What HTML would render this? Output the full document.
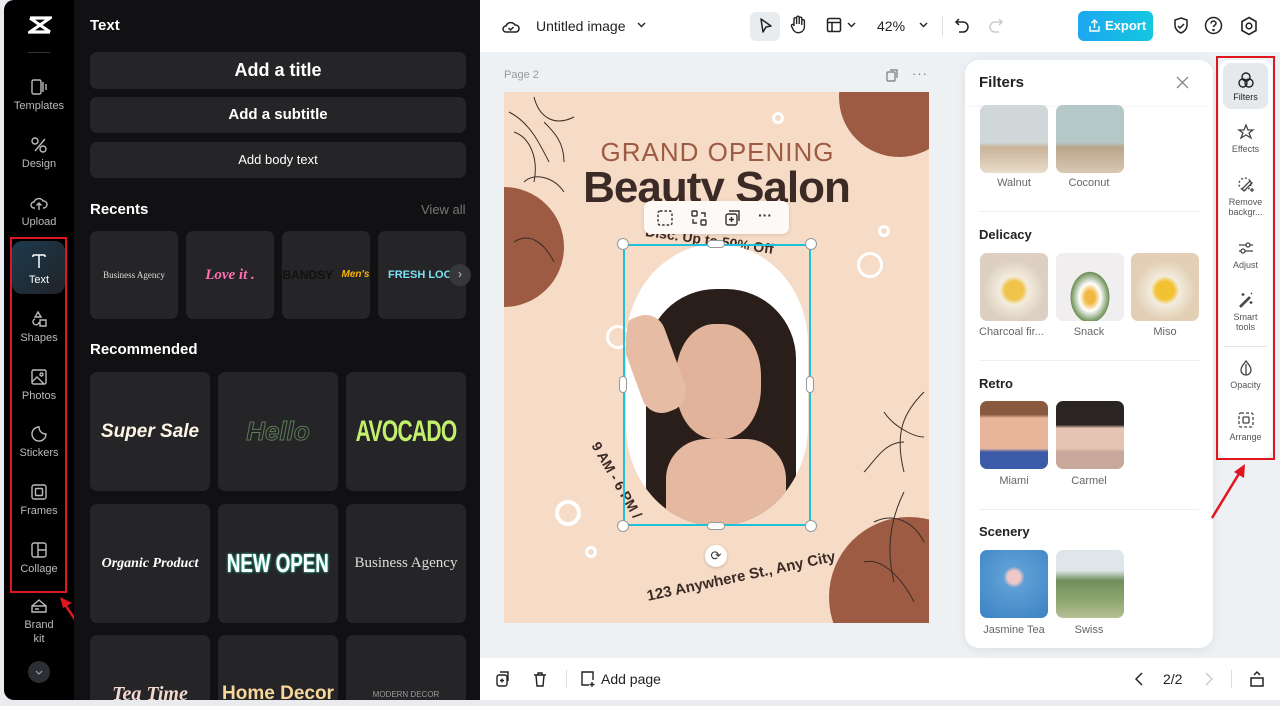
<!DOCTYPE html>
<html><head><meta charset="utf-8"><style>
*{box-sizing:border-box;margin:0;padding:0}
body{width:1280px;height:706px;overflow:hidden;background:#e9ebee;font-family:"Liberation Sans",sans-serif;position:relative}
.abs{position:absolute}
#nav{left:4px;top:0;width:70px;height:700px;background:#000;border-radius:10px 0 0 10px}
#panel{left:74px;top:0;width:406px;height:700px;background:#111113}
.ni{position:absolute;left:0;width:70px;text-align:center;color:#bbb;font-size:11px}
.ni svg{display:block;margin:0 auto 4px}
.btn{position:absolute;left:90px;width:376px;background:#252528;border-radius:7px;color:#fff;text-align:center;font-weight:bold}
.card{position:absolute;background:#252528;border-radius:7px;display:flex;align-items:center;justify-content:center;overflow:hidden;white-space:nowrap}
.h{color:#fff;font-weight:bold;font-size:15px;position:absolute}
#top{left:480px;top:0;width:800px;height:52px;background:#fff}
#canvas{left:480px;top:52px;width:800px;height:606px;background:#eef1f4}
#bot{left:480px;top:658px;width:800px;height:42px;background:#fff}
#filters{left:965px;top:60px;width:248px;height:588px;background:#fff;border-radius:14px;box-shadow:0 2px 10px rgba(0,0,0,.08)}
.th{position:absolute;width:68px;height:68px;border-radius:7px}
.tl{position:absolute;width:80px;text-align:center;font-size:11px;color:#666}
.fh{position:absolute;left:979px;font-size:13px;font-weight:bold;color:#222}
.dv{position:absolute;left:979px;width:220px;height:1px;background:#eceef0}
#rt{left:1219px;top:60px;width:53px;height:398px;background:#fff;border-radius:10px}
.ri{position:absolute;left:0;width:53px;text-align:center;font-size:9px;color:#555;line-height:10px}
.ri svg{display:block;margin:0 auto 3px}
</style></head><body>

<div id="nav" class="abs">
  <svg class="abs" style="left:24px;top:15px" width="24" height="20" viewBox="0 0 24 20"><path d="M2 3h20L2 17h20M2 3l20 14" stroke="#fff" stroke-width="3.2" fill="none"/></svg>
  <div class="abs" style="left:24px;top:52px;width:22px;height:1px;background:#333"></div>
  <div class="ni" style="top:78px"><svg width="18" height="18" viewBox="0 0 18 18" fill="none" stroke="#bbb" stroke-width="1.4"><rect x="2" y="2" width="9" height="14" rx="1.5"/><path d="M13 4v10M16 6v6"/></svg>Templates</div>
  <div class="ni" style="top:136px"><svg width="18" height="18" viewBox="0 0 18 18" fill="none" stroke="#bbb" stroke-width="1.4"><circle cx="5" cy="5" r="3"/><circle cx="13" cy="13" r="3"/><path d="M5 15L15 3"/></svg>Design</div>
  <div class="ni" style="top:194px"><svg width="18" height="18" viewBox="0 0 18 18" fill="none" stroke="#bbb" stroke-width="1.4"><path d="M5 14H4a3 3 0 010-6 5 5 0 019-1 3.5 3.5 0 011 7h-1M9 16V9M6.5 11.5L9 9l2.5 2.5"/></svg>Upload</div>
  <div class="abs" style="left:8px;top:241px;width:53px;height:53px;border-radius:10px;background:linear-gradient(135deg,#1d3a4e,#202327)"></div>
  <div class="ni" style="top:252px;color:#fff"><svg width="18" height="18" viewBox="0 0 18 18" fill="none" stroke="#fff" stroke-width="1.5"><path d="M3 3h12M9 3v13M3 3v2M15 3v2"/></svg>Text</div>
  <div class="ni" style="top:310px"><svg width="18" height="18" viewBox="0 0 18 18" fill="none" stroke="#bbb" stroke-width="1.4"><path d="M8 2l3 5H5zM5 9a3 3 0 104 3M10 10h6v6h-6z"/></svg>Shapes</div>
  <div class="ni" style="top:368px"><svg width="18" height="18" viewBox="0 0 18 18" fill="none" stroke="#bbb" stroke-width="1.4"><rect x="2" y="2" width="14" height="14" rx="1.5"/><circle cx="11.5" cy="6.5" r="1.5"/><path d="M2 14l5-5 7 7"/></svg>Photos</div>
  <div class="ni" style="top:425px"><svg width="18" height="18" viewBox="0 0 18 18" fill="none" stroke="#bbb" stroke-width="1.4"><path d="M9 2a7 7 0 107 7c-4 0-7-3-7-7z"/></svg>Stickers</div>
  <div class="ni" style="top:483px"><svg width="18" height="18" viewBox="0 0 18 18" fill="none" stroke="#bbb" stroke-width="1.4"><rect x="2" y="2" width="14" height="14" rx="2"/><rect x="5.5" y="5.5" width="7" height="7" rx="1"/></svg>Frames</div>
  <div class="ni" style="top:541px"><svg width="18" height="18" viewBox="0 0 18 18" fill="none" stroke="#bbb" stroke-width="1.4"><rect x="2" y="2" width="14" height="14" rx="2"/><path d="M8 2v14M8 9h8"/></svg>Collage</div>
  <div class="ni" style="top:598px;line-height:14px"><svg width="18" height="16" viewBox="0 0 18 16" fill="none" stroke="#bbb" stroke-width="1.4"><path d="M2 8l7-6 7 6M2 8h14v6H2zM5 11h4"/></svg>Brand<br>kit</div>
  <div class="abs" style="left:24px;top:661px;width:22px;height:22px;border-radius:50%;background:#2d2e33"></div>
  <svg class="abs" style="left:31px;top:668px" width="8" height="8" viewBox="0 0 8 8"><path d="M1 3l3 3 3-3" stroke="#aaa" fill="none"/></svg>
</div>
<div class="abs" style="left:10px;top:237px;width:57px;height:356px;border:2px solid #e0161e"></div>
<svg class="abs" style="left:58px;top:597px" width="32" height="45" viewBox="0 0 32 45"><path d="M30 42L6 6" stroke="#e0161e" stroke-width="2.5"/><path d="M2 0l12 6-9 5z" fill="#e0161e"/></svg>

<div id="panel" class="abs"></div>
<div class="h" style="left:90px;top:17px">Text</div>
<div class="btn" style="top:52px;height:37px;line-height:37px;font-size:18px">Add a title</div>
<div class="btn" style="top:97px;height:36px;line-height:36px;font-size:15px">Add a subtitle</div>
<div class="btn" style="top:142px;height:36px;line-height:36px;font-size:13px;font-weight:normal">Add body text</div>
<div class="h" style="left:90px;top:201px">Recents</div>
<div class="abs" style="left:421px;top:202px;color:#777;font-size:13px">View all</div>
<div class="card" style="left:90px;top:231px;width:88px;height:88px;color:#ddd;font-family:'Liberation Serif',serif;font-size:9px">Business Agency</div>
<div class="card" style="left:186px;top:231px;width:88px;height:88px;color:#ff6fae;font-family:'Liberation Serif',serif;font-weight:bold;font-style:italic;font-size:15px">Love it .</div>
<div class="card" style="left:282px;top:231px;width:88px;height:88px;color:#111;font-weight:bold;font-size:12px;line-height:10px;text-align:center;white-space:normal">BANDSY<br><span style="color:#f5b800;font-style:italic;font-size:10px">&nbsp;&nbsp;&nbsp;Men's</span></div>
<div class="card" style="left:378px;top:231px;width:88px;height:88px;color:#7ee0f5;font-weight:bold;font-size:11px;justify-content:flex-start;padding-left:10px">FRESH LOOK</div>
<div class="abs" style="left:449px;top:264px;width:22px;height:22px;border-radius:50%;background:#36373b;color:#ccc;font-size:12px;text-align:center;line-height:21px">›</div>
<div class="h" style="left:90px;top:341px">Recommended</div>
<div class="card" style="left:90px;top:372px;width:120px;height:119px;color:#fff5e6;font-weight:bold;font-style:italic;font-size:19px">Super Sale</div>
<div class="card" style="left:218px;top:372px;width:120px;height:119px;color:transparent;-webkit-text-stroke:1px #5c7a55;font-weight:bold;font-style:italic;font-size:26px">Hello</div>
<div class="card" style="left:346px;top:372px;width:120px;height:119px;color:#c3f06a;font-weight:bold;font-size:30px;letter-spacing:-1px"><span style="display:inline-block;transform:scaleX(.7)">AVOCADO</span></div>
<div class="card" style="left:90px;top:504px;width:120px;height:119px;color:#fff;font-family:'Liberation Serif',serif;font-weight:bold;font-style:italic;font-size:14px">Organic Product</div>
<div class="card" style="left:218px;top:504px;width:120px;height:119px;color:#fff;font-weight:bold;font-size:26px;text-shadow:0 0 3px #35e0b0,0 0 1px #35e0b0"><span style="display:inline-block;transform:scaleX(.72);white-space:nowrap">NEW OPEN</span></div>
<div class="card" style="left:346px;top:504px;width:120px;height:119px;color:#ddd;font-family:'Liberation Serif',serif;font-size:15px">Business Agency</div>
<div class="card" style="left:90px;top:635px;width:120px;height:65px;border-radius:7px 7px 0 0;align-items:flex-end;color:#f3d8d0;font-family:'Liberation Serif',serif;font-weight:bold;font-style:italic;font-size:20px;line-height:12px">Tea Time</div>
<div class="card" style="left:218px;top:635px;width:120px;height:65px;border-radius:7px 7px 0 0;align-items:flex-end;color:#f7d79a;font-weight:bold;font-size:19px;line-height:12px">Home Decor</div>
<div class="card" style="left:346px;top:635px;width:120px;height:65px;border-radius:7px 7px 0 0;align-items:flex-end;color:#999;font-size:8px;line-height:6px;padding-bottom:2px">MODERN DECOR</div>
<div class="abs" style="left:480px;top:328px;width:7px;height:48px;background:#2a2b2e;border-radius:0 4px 4px 0"></div>

<div id="top" class="abs">
  <svg class="abs" style="left:22px;top:17px" width="18" height="18" viewBox="0 0 18 18" fill="none" stroke="#222" stroke-width="1.5"><path d="M5 15H4a3 3 0 010-6 5 5 0 019-1 3.5 3.5 0 011 7H5z"/><path d="M6.5 11l2 2 3-3"/></svg>
  <div class="abs" style="left:56px;top:18px;font-size:14px;color:#222">Untitled image</div>
  <svg class="abs" style="left:157px;top:22px" width="9" height="7"><path d="M1 1l3.5 3.5L8 1" stroke="#222" fill="none" stroke-width="1.4"/></svg>
  <div class="abs" style="left:270px;top:12px;width:30px;height:29px;background:#e9ecef;border-radius:6px"></div>
  <svg class="abs" style="left:278px;top:17px" width="16" height="18" viewBox="0 0 16 18"><path d="M3 2l10 7-5 1-3 5z" stroke="#222" stroke-width="1.5" fill="none" stroke-linejoin="round"/></svg>
  <svg class="abs" style="left:309px;top:15px" width="18" height="20" viewBox="0 0 18 20" fill="none" stroke="#222" stroke-width="1.4"><path d="M5 11V4a1.3 1.3 0 012.6 0v5M7.6 8V2.5a1.3 1.3 0 012.6 0V9M10.2 8V3.5a1.3 1.3 0 012.6 0V10M12.8 9V6a1.3 1.3 0 012.6 0v6a6 6 0 01-11 3l-2-4a1.3 1.3 0 012.2-1.2L5 11"/></svg>
  <svg class="abs" style="left:346px;top:17px" width="16" height="16" viewBox="0 0 16 16" fill="none" stroke="#222" stroke-width="1.5"><rect x="1.5" y="1.5" width="13" height="13" rx="1.5"/><path d="M1.5 5.5h13M6 5.5v9"/></svg>
  <svg class="abs" style="left:367px;top:22px" width="9" height="7"><path d="M1 1l3.5 3.5L8 1" stroke="#222" fill="none" stroke-width="1.4"/></svg>
  <div class="abs" style="left:397px;top:18px;font-size:14px;color:#222">42%</div>
  <svg class="abs" style="left:439px;top:22px" width="9" height="7"><path d="M1 1l3.5 3.5L8 1" stroke="#222" fill="none" stroke-width="1.4"/></svg>
  <div class="abs" style="left:462px;top:16px;width:1px;height:20px;background:#ddd"></div>
  <svg class="abs" style="left:474px;top:17px" width="16" height="17" viewBox="0 0 16 17" fill="none" stroke="#222" stroke-width="1.5"><path d="M5 2L2 5l3 3M2 5h7a5 5 0 010 10H5"/></svg>
  <svg class="abs" style="left:508px;top:17px" width="16" height="17" viewBox="0 0 16 17" fill="none" stroke="#ccc" stroke-width="1.5"><path d="M11 2l3 3-3 3M14 5H7a5 5 0 000 10h4"/></svg>
  <div class="abs" style="left:598px;top:11px;width:75px;height:30px;border-radius:6px;background:linear-gradient(90deg,#1ca7f0,#14c8e0);color:#fff;font-size:13px;font-weight:bold;line-height:30px;padding-left:27px">Export</div>
  <svg class="abs" style="left:608px;top:19px" width="13" height="14" viewBox="0 0 13 14" fill="none" stroke="#fff" stroke-width="1.4"><path d="M6.5 9V1M3.5 4l3-3 3 3M2 7v5h9V7"/></svg>
  <svg class="abs" style="left:692px;top:16px" width="18" height="20" viewBox="0 0 18 20" fill="none" stroke="#222" stroke-width="1.5"><path d="M9 2l6 2v5c0 4-3 7-6 8-3-1-6-4-6-8V4z"/><path d="M6 10l2 2 4-4"/></svg>
  <svg class="abs" style="left:724px;top:16px" width="19" height="19" viewBox="0 0 19 19" fill="none" stroke="#222" stroke-width="1.5"><circle cx="9.5" cy="9.5" r="8"/><path d="M7 7.5a2.5 2.5 0 115 0c0 1.5-2.5 2-2.5 3.5"/><circle cx="9.5" cy="14" r=".5"/></svg>
  <svg class="abs" style="left:760px;top:16px" width="18" height="20" viewBox="0 0 18 20" fill="none" stroke="#222" stroke-width="1.6"><path d="M9 1.5l7 4v9l-7 4-7-4v-9z"/><circle cx="9" cy="10" r="2.8"/></svg>
</div>

<div id="canvas" class="abs"></div>
<div class="abs" style="left:504px;top:69px;font-size:11px;color:#999">Page 2</div>
<svg class="abs" style="left:886px;top:69px" width="13" height="13" viewBox="0 0 13 13" fill="none" stroke="#777" stroke-width="1.2"><rect x="1" y="3" width="8" height="9" rx="1"/><path d="M4 1h7v8"/></svg>
<div class="abs" style="left:912px;top:66px;font-size:13px;color:#777;letter-spacing:1px">···</div>

<div class="abs" style="left:504px;top:92px;width:425px;height:531px;background:#f6dcc6;overflow:hidden">
  <div class="abs" style="left:-60px;top:95px;width:120px;height:120px;border-radius:50%;background:#9e5b44"></div>
  <div class="abs" style="left:335px;top:-55px;width:120px;height:120px;border-radius:50%;background:#9e5b44"></div>
  <div class="abs" style="left:325px;top:425px;width:160px;height:160px;border-radius:50%;background:#9e5b44"></div>
  <svg class="abs" style="left:0;top:0" width="425" height="531" fill="none" stroke="#3a2d28" stroke-width="1">
    <path d="M5 20c20 10 30 30 40 50M30 5c5 20 20 30 40 20M10 40c15 5 25 25 20 50M40 30c10 10 20 20 20 40M20 90c10-10 30-5 40 10M10 150c15-10 30 0 40 20"/>
    <path d="M420 300c-20 20-30 40-20 80M400 350c-20 0-30 20-40 30M380 320c10 15 30 25 40 25M370 430c20-10 40 0 50 20M360 470c20-5 40 20 50 40M400 400c-10 20-20 50-10 90"/>
  </svg>
  <div class="abs" style="left:268px;top:20px;width:12px;height:12px;border-radius:50%;border:3.5px solid #fff"></div>
  <div class="abs" style="left:374px;top:133px;width:12px;height:12px;border-radius:50%;border:3.5px solid #fff"></div>
  <div class="abs" style="left:353px;top:160px;width:26px;height:26px;border-radius:50%;border:3.5px solid #fff"></div>
  <div class="abs" style="left:102px;top:233px;width:24px;height:24px;border-radius:50%;border:3.5px solid #fff"></div>
  <div class="abs" style="left:51px;top:408px;width:26px;height:26px;border-radius:50%;border:4px solid #fff"></div>
  <div class="abs" style="left:81px;top:454px;width:12px;height:12px;border-radius:50%;border:3.5px solid #fff"></div>
  <div class="abs" style="left:0;top:45px;width:425px;text-align:center;font-size:26px;color:#9e5b44;letter-spacing:1px;padding-left:2px">GRAND OPENING</div>
  <div class="abs" style="left:0;top:71px;width:425px;text-align:center;font-size:44px;font-weight:bold;color:#3b2a26;letter-spacing:-1px">Beauty Salon</div>
  <div class="abs" style="left:141px;top:140px;font-size:14px;font-weight:bold;color:#3b2a26;transform:rotate(8deg)">Disc. Up to 50% Off</div>
  <div class="abs" style="left:122px;top:152px;width:182px;height:282px;border-radius:91px 91px 91px 91px/100px 100px 100px 100px;background:#fff;overflow:hidden">
    <div class="abs" style="left:20px;top:45px;width:150px;height:250px;border-radius:70px 70px 0 0;background:#2a1e1a"></div>
    <div class="abs" style="left:50px;top:80px;width:85px;height:115px;border-radius:45%;background:#e0b39a"></div>
    <div class="abs" style="left:40px;top:195px;width:120px;height:100px;background:#e4b9a0;border-radius:40px 40px 0 0"></div>
    <div class="abs" style="left:5px;top:70px;width:45px;height:100px;border-radius:20px;background:#e6bca4;transform:rotate(-20deg)"></div>
  </div>
  <div class="abs" style="left:141px;top:476px;font-size:15px;font-weight:bold;color:#3b2a26;transform:rotate(-12deg)">123 Anywhere St., Any City</div>
  <div class="abs" style="left:70px;top:380px;font-size:14px;font-weight:bold;color:#3b2a26;transform:rotate(60deg)">9 AM - 6 PM /</div>
</div>
<div class="abs" style="left:623px;top:244px;width:188px;height:282px;border:2px solid #1fc0dc"></div>
<div class="abs" style="left:617px;top:238px;width:12px;height:12px;border-radius:50%;background:#fff;border:1px solid #999"></div>
<div class="abs" style="left:805px;top:238px;width:12px;height:12px;border-radius:50%;background:#fff;border:1px solid #999"></div>
<div class="abs" style="left:617px;top:520px;width:12px;height:12px;border-radius:50%;background:#fff;border:1px solid #999"></div>
<div class="abs" style="left:805px;top:520px;width:12px;height:12px;border-radius:50%;background:#fff;border:1px solid #999"></div>
<div class="abs" style="left:707px;top:240px;width:18px;height:8px;border-radius:4px;background:#fff;border:1px solid #999"></div>
<div class="abs" style="left:707px;top:522px;width:18px;height:8px;border-radius:4px;background:#fff;border:1px solid #999"></div>
<div class="abs" style="left:619px;top:376px;width:8px;height:17px;border-radius:4px;background:#fff;border:1px solid #999"></div>
<div class="abs" style="left:806px;top:376px;width:8px;height:17px;border-radius:4px;background:#fff;border:1px solid #999"></div>
<div class="abs" style="left:705px;top:545px;width:22px;height:22px;border-radius:50%;background:#fff;box-shadow:0 1px 3px rgba(0,0,0,.2);text-align:center;line-height:22px;font-size:13px;color:#333">⟳</div>
<div class="abs" style="left:644px;top:201px;width:145px;height:33px;border-radius:7px;background:#fcf9f6;box-shadow:0 1px 4px rgba(0,0,0,.12)">
  <svg class="abs" style="left:13px;top:9px" width="16" height="16" fill="none" stroke="#333" stroke-width="1.4" stroke-dasharray="2.5 2"><rect x="1" y="1" width="14" height="14" rx="2"/></svg>
  <svg class="abs" style="left:47px;top:9px" width="16" height="16" fill="none" stroke="#333" stroke-width="1.4"><rect x="1" y="1" width="5" height="5" rx="1"/><rect x="10" y="10" width="5" height="5" rx="1"/><path d="M10 3h4v4M6 13H2V9"/></svg>
  <svg class="abs" style="left:81px;top:9px" width="16" height="16" fill="none" stroke="#333" stroke-width="1.4"><rect x="1" y="4" width="11" height="11" rx="2"/><path d="M4 1h10v10M6.5 7v5M4 9.5h5"/></svg>
  <div class="abs" style="left:114px;top:6px;font-size:14px;color:#333;font-weight:bold">···</div>
</div>

<div id="filters" class="abs"></div>
<div class="abs" style="left:965px;top:60px;width:248px;height:45px;background:#fff;border-radius:14px 14px 0 0;box-shadow:0 4px 6px -4px rgba(0,0,0,.08)"></div>
<div class="abs" style="left:979px;top:74px;font-size:15px;font-weight:bold;color:#222">Filters</div>
<svg class="abs" style="left:1176px;top:76px" width="13" height="13"><path d="M1 1l11 11M12 1L1 12" stroke="#888" stroke-width="1.3"/></svg>
<div class="th" style="left:980px;top:105px;background:linear-gradient(#cfd7d8 55%,#c8b49a 62%,#e9dcca)"></div>
<div class="th" style="left:1056px;top:105px;background:linear-gradient(#b5c8c8 55%,#b9a58b 62%,#d8c8b2)"></div>
<div class="tl" style="left:974px;top:177px">Walnut</div>
<div class="tl" style="left:1049px;top:177px">Coconut</div>
<div class="dv" style="top:211px"></div>
<div class="fh" style="top:227px">Delicacy</div>
<div class="th" style="left:980px;top:253px;background:radial-gradient(circle at 50% 55%,#f0c34a 18%,#f3ecdd 28%,#ddd0c2 60%)"></div>
<div class="th" style="left:1056px;top:253px;background:radial-gradient(ellipse at 50% 65%,#f0b840 10%,#fff 22%,#6b8f55 40%,#f0eeee 41%)"></div>
<div class="th" style="left:1131px;top:253px;background:radial-gradient(circle at 50% 55%,#f2c232 18%,#f3ecdd 28%,#e2cfb5 60%)"></div>
<div class="tl" style="left:974px;top:326px;text-align:left;padding-left:5px">Charcoal fir...</div>
<div class="tl" style="left:1049px;top:326px">Snack</div>
<div class="tl" style="left:1125px;top:326px">Miso</div>
<div class="dv" style="top:360px"></div>
<div class="fh" style="top:376px">Retro</div>
<div class="th" style="left:980px;top:401px;background:linear-gradient(#8a5a40 20%,#e8b49a 25%,#e8b49a 70%,#3b5aa8 75%)"></div>
<div class="th" style="left:1056px;top:401px;background:linear-gradient(#2a2523 35%,#e6c4b3 40%,#e6c4b3 70%,#c8a89a 75%)"></div>
<div class="tl" style="left:974px;top:475px">Miami</div>
<div class="tl" style="left:1049px;top:475px">Carmel</div>
<div class="dv" style="top:509px"></div>
<div class="fh" style="top:524px">Scenery</div>
<div class="th" style="left:980px;top:550px;background:radial-gradient(circle at 50% 40%,#f0c8c8 12%,#5e9fd5 20%,#3b82c4)"></div>
<div class="th" style="left:1056px;top:550px;background:linear-gradient(#dfe6ea 30%,#6f8f5c 45%,#90a770 75%,#b4c096)"></div>
<div class="tl" style="left:974px;top:624px">Jasmine Tea</div>
<div class="tl" style="left:1049px;top:624px">Swiss</div>

<div id="rt" class="abs"></div>
<div class="abs" style="left:1223px;top:63px;width:45px;height:46px;border-radius:8px;background:#e6e9ec"></div>
<div class="ri" style="left:1219px;top:71px"><svg width="18" height="18" viewBox="0 0 18 18" fill="none" stroke="#222" stroke-width="1.4"><circle cx="9" cy="6" r="4"/><circle cx="6" cy="12" r="4"/><circle cx="12" cy="12" r="4"/></svg><span style="color:#222">Filters</span></div>
<div class="ri" style="left:1219px;top:123px"><svg width="18" height="18" viewBox="0 0 18 18" fill="none" stroke="#444" stroke-width="1.3"><path d="M9 2l2 5h5l-4 3 2 5-5-3-5 3 2-5-4-3h5z"/></svg>Effects</div>
<div class="ri" style="left:1219px;top:176px"><svg width="18" height="18" viewBox="0 0 18 18" fill="none" stroke="#444" stroke-width="1.3"><circle cx="8" cy="8" r="6" stroke-dasharray="2 2"/><path d="M5 13l8-8 2 2-8 8zM15 12v4M13 14h4"/></svg>Remove<br>backgr...</div>
<div class="ri" style="left:1219px;top:239px"><svg width="18" height="18" viewBox="0 0 18 18" fill="none" stroke="#444" stroke-width="1.3"><path d="M2 6h14M2 12h14"/><circle cx="11" cy="6" r="2" fill="#fff"/><circle cx="6" cy="12" r="2" fill="#fff"/></svg>Adjust</div>
<div class="ri" style="left:1219px;top:291px"><svg width="18" height="18" viewBox="0 0 18 18" fill="none" stroke="#444" stroke-width="1.3"><path d="M3 15l9-9 1 1-9 9zM6 2v3M4.5 3.5h3M14 10v3M12.5 11.5h3M14 2l1 1"/></svg>Smart<br>tools</div>
<div class="abs" style="left:1223px;top:346px;width:44px;height:1px;background:#e5e5e5"></div>
<div class="ri" style="left:1219px;top:359px"><svg width="18" height="18" viewBox="0 0 18 18" fill="none" stroke="#444" stroke-width="1.3"><path d="M9 2c3 4 5 6 5 9a5 5 0 01-10 0c0-3 2-5 5-9z"/><path d="M9 5v11" /></svg>Opacity</div>
<div class="ri" style="left:1219px;top:411px"><svg width="18" height="18" viewBox="0 0 18 18" fill="none" stroke="#444" stroke-width="1.3"><rect x="2" y="2" width="14" height="14" rx="2" stroke-dasharray="3 2"/><rect x="6" y="6" width="6" height="6" rx="1"/></svg>Arrange</div>
<div class="abs" style="left:1216px;top:56px;width:59px;height:404px;border:2px solid #e0161e"></div>
<svg class="abs" style="left:1208px;top:462px" width="40" height="58" viewBox="0 0 40 58"><path d="M4 56L32 10" stroke="#e0161e" stroke-width="2.5"/><path d="M37 2l-1 14-10-6z" fill="#e0161e"/></svg>

<div id="bot" class="abs">
  <svg class="abs" style="left:16px;top:13px" width="14" height="16" viewBox="0 0 14 16" fill="none" stroke="#222" stroke-width="1.4"><rect x="1" y="4" width="10" height="11" rx="2"/><path d="M4 1h8v9M6 7.5v4M4 9.5h4"/></svg>
  <svg class="abs" style="left:53px;top:13px" width="14" height="16" viewBox="0 0 14 16" fill="none" stroke="#222" stroke-width="1.4"><path d="M1 4h12M5 4V2h4v2M3 4l1 11h6l1-11"/></svg>
  <div class="abs" style="left:86px;top:12px;width:1px;height:18px;background:#ddd"></div>
  <svg class="abs" style="left:100px;top:12px" width="16" height="18" viewBox="0 0 16 18" fill="none" stroke="#222" stroke-width="1.4"><path d="M9 15H2V2h11v8M12 12v5M9.5 14.5h5"/></svg>
  <div class="abs" style="left:121px;top:13px;font-size:14px;color:#222">Add page</div>
  <svg class="abs" style="left:655px;top:14px" width="8" height="14"><path d="M7 1L1 7l6 6" stroke="#222" fill="none" stroke-width="1.5"/></svg>
  <div class="abs" style="left:683px;top:13px;font-size:14px;color:#222">2/2</div>
  <svg class="abs" style="left:725px;top:14px" width="8" height="14"><path d="M1 1l6 6-6 6" stroke="#ccc" fill="none" stroke-width="1.5"/></svg>
  <div class="abs" style="left:751px;top:12px;width:1px;height:18px;background:#ddd"></div>
  <svg class="abs" style="left:769px;top:12px" width="16" height="18" viewBox="0 0 16 18" fill="none" stroke="#222" stroke-width="1.5"><path d="M2 8h12v8H2zM5 5l3-3 3 3"/></svg>
</div>
</body></html>
